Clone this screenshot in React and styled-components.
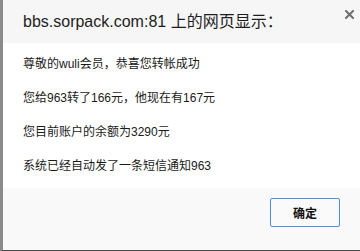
import React from 'react'
import styled, { createGlobalStyle } from 'styled-components'

const GlobalStyle = createGlobalStyle`
   html, body {
      margin: 0;
      padding: 0;
      background: #ffffff;
   }
   body {
      font-family: 'Liberation Sans', 'Noto Sans CJK SC', sans-serif;
   }
`

const messages = [
   '尊敬的wuli会员，恭喜您转帐成功',
   '您给963转了166元，他现在有167元',
   '您目前账户的余额为3290元',
   '系统已经自动发了一条短信通知963',
]

function CloseIcon() {
   return (
      <svg width="9" height="9" viewBox="0 0 9 9">
         <path
            d="M1 1 L8 8 M8 1 L1 8"
            stroke="#6f6f6f"
            strokeWidth="2"
            strokeLinecap="square"
         />
      </svg>
   )
}

function App() {
   return (
      <>
         <GlobalStyle />
         <Dialog>
            <TitleBar>
               <Title>bbs.sorpack.com:81 上的网页显示：</Title>
               <CloseButton aria-label="close">
                  <CloseIcon />
               </CloseButton>
            </TitleBar>
            <Body>
               {messages.map((text) => (
                  <Line key={text}>{text}</Line>
               ))}
            </Body>
            <Footer>
               <OkButton>确定</OkButton>
            </Footer>
         </Dialog>
      </>
   )
}

export default App

const Dialog = styled.div`
   width: 357px;
   height: 250px;
   display: flex;
   flex-direction: column;
   border-left: 3px solid #8a8a8a;
   border-bottom: 1px solid #4a4a4a;
   background: #ffffff;
`

const TitleBar = styled.div`
   height: 43px;
   flex-shrink: 0;
   display: flex;
   justify-content: space-between;
   align-items: flex-start;
   padding-left: 20px;
   background: #f6f6f6;
`

const Title = styled.h1`
   margin: 0;
   font-size: 16px;
   font-weight: 400;
   line-height: 43px;
   color: #1e1e1e;
`

const CloseButton = styled.div`
   display: flex;
   margin-top: 10px;
   margin-right: 6px;
`

const Body = styled.div`
   flex: 1;
   display: flex;
   flex-direction: column;
   gap: 16px;
   padding: 12px 0 0 20px;
`

const Line = styled.p`
   margin: 0;
   font-size: 12px;
   line-height: 18px;
   color: #1a1a1a;
`

const Footer = styled.div`
   height: 62px;
   flex-shrink: 0;
   display: flex;
   justify-content: flex-end;
   align-items: flex-start;
   padding: 10px 20px 0 0;
   box-sizing: border-box;
   background: #f9f9f9;
`

const OkButton = styled.button`
   width: 70px;
   height: 29px;
   padding: 0;
   border: 1px solid #4d8ef0;
   border-radius: 2px;
   background: #fafafa;
   font-family: 'Liberation Sans', 'Noto Sans CJK SC', sans-serif;
   font-size: 12px;
   font-weight: 700;
   color: #111111;
`
